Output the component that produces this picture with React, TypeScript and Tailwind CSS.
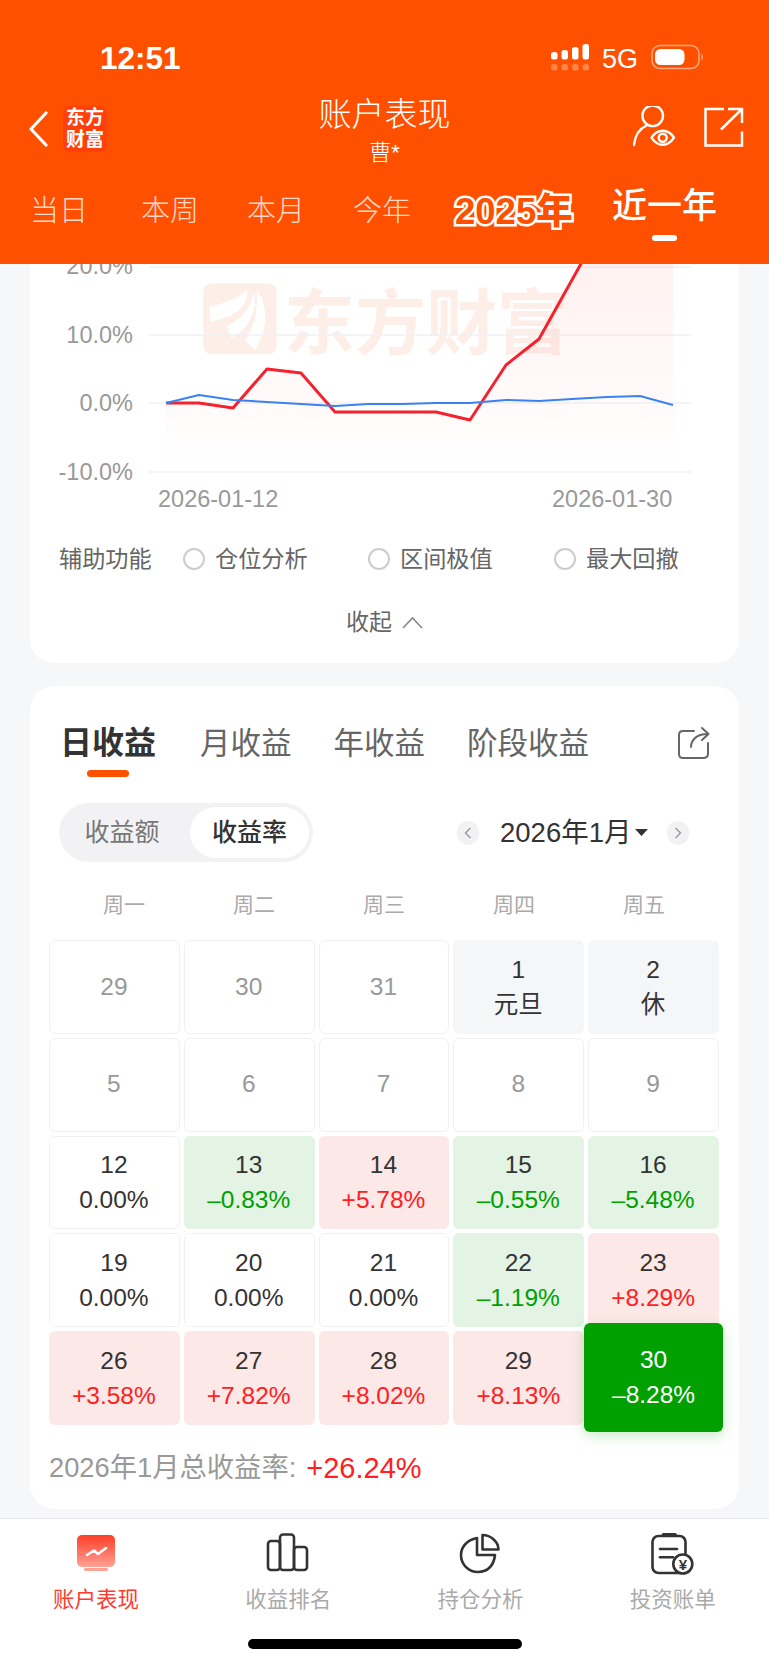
import React from "react";

const FONT = "font-['Liberation_Sans','Noto_Sans_CJK_SC',sans-serif]";

type Cell = { d: string; v?: string; t: "plain" | "holiday" | "zero" | "up" | "down" | "hero" };

const cells: Cell[] = [
  { d: "29", t: "plain" }, { d: "30", t: "plain" }, { d: "31", t: "plain" }, { d: "1", v: "元旦", t: "holiday" }, { d: "2", v: "休", t: "holiday" },
  { d: "5", t: "plain" }, { d: "6", t: "plain" }, { d: "7", t: "plain" }, { d: "8", t: "plain" }, { d: "9", t: "plain" },
  { d: "12", v: "0.00%", t: "zero" }, { d: "13", v: "–0.83%", t: "down" }, { d: "14", v: "+5.78%", t: "up" }, { d: "15", v: "–0.55%", t: "down" }, { d: "16", v: "–5.48%", t: "down" },
  { d: "19", v: "0.00%", t: "zero" }, { d: "20", v: "0.00%", t: "zero" }, { d: "21", v: "0.00%", t: "zero" }, { d: "22", v: "–1.19%", t: "down" }, { d: "23", v: "+8.29%", t: "up" },
  { d: "26", v: "+3.58%", t: "up" }, { d: "27", v: "+7.82%", t: "up" }, { d: "28", v: "+8.02%", t: "up" }, { d: "29", v: "+8.13%", t: "up" }, { d: "30", v: "–8.28%", t: "hero" },
];

function CalCell({ c }: { c: Cell }) {
  if (c.t === "plain") {
    return <div className="h-[93.75px] rounded-md border border-[#f1f1f3] bg-white flex items-center justify-center pr-[1px] text-[24.5px] text-[#999999]">{c.d}</div>;
  }
  if (c.t === "hero") {
    return (
      <div className="relative h-[93.75px]">
        <div className="absolute -left-[4px] -right-[4px] -top-[8px] -bottom-[7px] z-10 rounded-md bg-[#00a000] shadow-[0_4px_14px_rgba(0,160,0,0.22)] flex flex-col items-center justify-center text-white text-[24.5px] leading-[35px]">
          <div>{c.d}</div>
          <div>{c.v}</div>
        </div>
      </div>
    );
  }
  const box = c.t === "holiday" ? "bg-[#f5f6f8]" : c.t === "zero" ? "border border-[#f1f1f3] bg-white" : c.t === "up" ? "bg-[#fde8e8]" : "bg-[#e3f3e4]";
  const vc = c.t === "up" ? "text-[#ff2020]" : c.t === "down" ? "text-[#00a000]" : "text-[#333333]";
  return (
    <div className={`h-[93.75px] rounded-md flex flex-col items-center justify-center pr-[1px] text-[24.5px] leading-[35px] text-[#333333] ${box}`}>
      <div>{c.d}</div>
      <div className={vc}>{c.v}</div>
    </div>
  );
}

function StatusIcons() {
  return (
    <svg width="154" height="32" viewBox="550 44 154 32" className="block">
      <g fill="#fff">
        <rect x="551" y="52" width="6.5" height="7.5" rx="2.5" />
        <rect x="561.5" y="50" width="6.5" height="9.5" rx="2.5" />
        <rect x="572" y="47" width="6.5" height="12.5" rx="2.5" />
        <rect x="582.5" y="44" width="6.5" height="15.5" rx="2.5" />
      </g>
      <g fill="#fff" opacity="0.3">
        <rect x="551" y="64" width="6.5" height="6.5" rx="2.5" />
        <rect x="561.5" y="64" width="6.5" height="6.5" rx="2.5" />
        <rect x="572" y="64" width="6.5" height="6.5" rx="2.5" />
        <rect x="582.5" y="64" width="6.5" height="6.5" rx="2.5" />
      </g>
      <text x="602" y="68" fill="#fff" fontSize="27" fontFamily="Liberation Sans">5G</text>
      <rect x="652" y="45.5" width="47" height="23" rx="8" fill="none" stroke="#fff" strokeOpacity="0.5" strokeWidth="1.5" />
      <rect x="655" y="49" width="29.5" height="16" rx="5.5" fill="#fff" />
      <path d="M701.5 53.5 C703.5 54.5 703.5 59.5 701.5 60.5 Z" fill="#fff" fillOpacity="0.5" />
    </svg>
  );
}

function UserEye() {
  return (
    <svg width="44" height="42" viewBox="632 110 44 42" fill="none" stroke="#fff" strokeWidth="2.4" strokeLinecap="round" className="block">
      <circle cx="651.7" cy="119.8" r="10.3" />
      <path d="M633 149 C634 140 638 133 645.5 129.5" />
      <path d="M650.5 141.7 C654 136.5 658 134.8 661.7 134.8 C665.5 134.8 669.5 136.5 673 141.7 C669.5 147 665.5 148.8 661.7 148.8 C658 148.8 654 147 650.5 141.7 Z" />
      <circle cx="661.7" cy="141.7" r="4" />
    </svg>
  );
}

function ShareBox() {
  return (
    <svg width="42" height="42" viewBox="703 108 42 42" fill="none" stroke="#fff" strokeWidth="2.5" className="block">
      <path d="M724 111 H705.5 V147.5 H742 V133.5" />
      <path d="M721 131.5 L741.5 111.5 M728 111 H742 V125" />
    </svg>
  );
}

function Chart() {
  const red = "166,403 199,403 233,408 267,369 301,373 335,412 368,412 402,412 436,412 470,420 506,365 539,339 582,262";
  const blue = "166,403 199,395 233,400 267,402 301,404 335,406 368,404 403,404 436,403 470,403 506,400 539,401 572,399 607,397 640,396 673,405";
  return (
    <svg width="709" height="264" viewBox="30 264 709 264" className="block" fontFamily="Liberation Sans">
      <defs>
        <linearGradient id="area" x1="0" y1="264" x2="0" y2="472" gradientUnits="userSpaceOnUse">
          <stop offset="0" stopColor="#ff3b30" stopOpacity="0.07" />
          <stop offset="1" stopColor="#ff3b30" stopOpacity="0" />
        </linearGradient>
      </defs>
      <g transform="translate(195 270) scale(0.3333)">
        <rect x="25" y="40" width="220" height="213" rx="26" fill="#fdeee8" />
        <g fill="#fff">
          <path d="M45 155 L45 110 C90 100 130 85 155 60 C165 100 130 140 45 155 Z" />
          <path d="M95 170 C130 150 170 120 175 65 C190 110 170 170 110 205 Z" />
          <path d="M150 210 C180 170 190 110 185 60 C225 110 215 190 180 240 Z" />
        </g>
      </g>
      <text x="284" y="348" fontSize="71" fontWeight="700" fill="#fdeee8" fontFamily="Noto Sans CJK SC">东方财富</text>
      {[267, 335, 403, 472].map((y) => (
        <line key={y} x1="149" x2="691" y1={y} y2={y} stroke="#f0f1f4" strokeWidth="1.5" />
      ))}
      <polygon points={`${red} 673,262 673,472 166,472`} fill="url(#area)" />
      <polyline points={red} fill="none" stroke="#f5222d" strokeWidth="3" strokeLinejoin="round" />
      <polyline points={blue} fill="none" stroke="#3b82f0" strokeWidth="2" strokeLinejoin="round" />
      <g fill="#999999" fontSize="23.5" textAnchor="end">
        <text x="133" y="274">20.0%</text>
        <text x="133" y="343">10.0%</text>
        <text x="133" y="411">0.0%</text>
        <text x="133" y="480">-10.0%</text>
      </g>
      <g fill="#999999" fontSize="23.5">
        <text x="158" y="507">2026-01-12</text>
        <text x="552" y="507">2026-01-30</text>
      </g>
    </svg>
  );
}

function Option({ label, w }: { label: string; w: string }) {
  return (
    <div className={`flex items-center gap-[10px] ${w}`}>
      <span className="w-[22px] h-[22px] rounded-full border-2 border-[#cccccc] bg-white" />
      <span>{label}</span>
    </div>
  );
}

function TabIconPerf() {
  return (
    <svg width="48" height="44" viewBox="0 0 48 44" className="block">
      <defs>
        <linearGradient id="perf" x1="0" y1="0" x2="0" y2="1">
          <stop offset="0" stopColor="#ff3e26" />
          <stop offset="1" stopColor="#ffa194" />
        </linearGradient>
      </defs>
      <rect x="5" y="4" width="38" height="32" rx="5" fill="url(#perf)" />
      <rect x="12" y="37" width="24" height="3" rx="1.5" fill="#ffa194" />
      <polyline points="15,24 22,19.5 26,23 34,17" fill="none" stroke="#fff" strokeWidth="2.6" strokeLinecap="round" strokeLinejoin="round" />
    </svg>
  );
}

function TabIconBars() {
  return (
    <svg width="48" height="44" viewBox="1 0 48 44" fill="none" stroke="#333333" strokeWidth="2.6" className="block">
      <rect x="5" y="10" width="12" height="29" rx="3" />
      <rect x="17" y="3.5" width="14" height="35.5" rx="3" />
      <rect x="31" y="16" width="13" height="23" rx="3" />
    </svg>
  );
}

function TabIconPie() {
  return (
    <svg width="48" height="44" viewBox="0 0 48 44" fill="none" stroke="#333333" strokeWidth="2.6" strokeLinejoin="round" className="block">
      <path d="M20 7 C9 9 4 17 4 24 C4 33 11 41 21 41 C31 41 37 34 38 24 H20 Z" />
      <path d="M25.5 4 V18.5 H41.5 C41.5 11 34 4 25.5 4 Z" />
    </svg>
  );
}

function TabIconBill() {
  return (
    <svg width="48" height="44" viewBox="0 0 48 44" className="block">
      <rect x="3.5" y="5" width="33" height="37" rx="6" fill="none" stroke="#333333" strokeWidth="2.6" />
      <rect x="12.8" y="2" width="15" height="3" rx="1.5" fill="#333333" />
      <line x1="11" y1="18" x2="28" y2="18" stroke="#333333" strokeWidth="2.6" strokeLinecap="round" />
      <line x1="11" y1="26.3" x2="24" y2="26.3" stroke="#333333" strokeWidth="2.6" strokeLinecap="round" />
      <circle cx="33.8" cy="33" r="9.5" fill="#fff" stroke="#333333" strokeWidth="2.6" />
      <text x="33.8" y="38.5" textAnchor="middle" fontSize="15" fontWeight="700" fill="#333333" fontFamily="Liberation Sans">¥</text>
    </svg>
  );
}

export default function App() {
  return (
    <div className={`w-[769px] h-[1665px] overflow-hidden flex flex-col bg-[#f6f7f9] ${FONT}`}>
      {/* header */}
      <header className="h-[264px] shrink-0 bg-[#ff5000] text-white">
        <div className="h-[74px] pt-[40px] flex items-start">
          <span className="ml-[100px] mt-[1px] text-[31.5px] leading-[34px] font-semibold">12:51</span>
          <div className="ml-auto mr-[65px] mt-[4px]"><StatusIcons /></div>
        </div>
        <div className="h-[78px] mt-[22px] flex items-start">
          <div className="w-[150px] flex items-center pl-[28px] pt-[10px]">
            <svg width="20" height="36" viewBox="0 0 20 36" fill="none" stroke="#fff" strokeWidth="3.2" strokeLinecap="round" strokeLinejoin="round" className="block">
              <path d="M18 2 L3 18 L18 34" />
            </svg>
            <div className="ml-[15px] w-[44px] h-[46px] rounded-lg bg-[#ff3f0c] flex items-center justify-center text-center text-[19px] leading-[22px] font-bold">
              东方<br />财富
            </div>
          </div>
          <div className="flex-1 flex flex-col items-center">
            <div className="text-[33px] leading-[38px] font-light">账户表现</div>
            <div className="mt-[4px] text-[22px] leading-[30px] font-light">曹*</div>
          </div>
          <div className="w-[150px] flex items-start justify-end gap-[26px] pr-[24px] pt-[10px]">
            <UserEye />
            <ShareBox />
          </div>
        </div>
        <div className="flex items-start pl-[30px] mt-[16px] h-[74px] text-[29px] leading-[30px] text-[#ffd9c9] font-light">
          <span className="mt-[6px] w-[58px]">当日</span>
          <span className="mt-[6px] w-[58px] ml-[53px]">本周</span>
          <span className="mt-[6px] w-[58px] ml-[48px]">本月</span>
          <span className="mt-[6px] w-[58px] ml-[48px]">今年</span>
          <span className="mt-[5px] ml-[44px] w-[126px] text-[36.5px] leading-[34px] font-black text-[#ff5000] [-webkit-text-stroke:5px_white] [paint-order:stroke_fill] whitespace-nowrap">2025年</span>
          <div className="ml-[31px] w-[105px] -mt-[2px] flex flex-col items-center">
            <span className="text-[35px] leading-[36px] text-white font-medium whitespace-nowrap">近一年</span>
            <span className="mt-[11px] w-[25px] h-[6px] rounded-full bg-white" />
          </div>
        </div>
      </header>

      {/* chart card */}
      <section className="mx-[30px] h-[399px] shrink-0 rounded-b-[24px] bg-white">
        <Chart />
        <div className="h-[60px] pt-[3px] pl-[29px] flex items-center text-[23.2px] text-[#666666]">
          <span className="w-[124px]">辅助功能</span>
          <Option label="仓位分析" w="w-[185px]" />
          <Option label="区间极值" w="w-[186px]" />
          <Option label="最大回撤" w="w-[130px]" />
        </div>
        <div className="h-[68px] flex items-center justify-center gap-[10px] text-[23px] text-[#666666]">
          <span>收起</span>
          <svg width="21" height="13" viewBox="0 0 21 13" fill="none" stroke="#888888" strokeWidth="1.6" className="block">
            <path d="M1 12 L10.5 2 L20 12" />
          </svg>
        </div>
      </section>

      {/* calendar card */}
      <section className="mx-[30px] mt-[23px] h-[823px] shrink-0 rounded-[24px] bg-white">
        <div className="pt-[35px] pl-[30px] pr-[28px] flex items-start gap-[42px] text-[#666666] text-[30.5px] leading-[44px]">
          <div className="flex flex-col w-[97px] mr-[1px]">
            <span className="text-[32px] font-bold text-[#333333] whitespace-nowrap">日收益</span>
            <span className="mt-[5px] ml-[27px] w-[42px] h-[7px] rounded-full bg-[#ff5000]" />
          </div>
          <span>月收益</span>
          <span>年收益</span>
          <span>阶段收益</span>
          <svg width="34" height="34" viewBox="0 0 34 34" fill="none" stroke="#666666" strokeWidth="2" strokeLinecap="round" strokeLinejoin="round" className="block ml-auto mt-[5px]">
            <path d="M17 5 H6 C3.5 5 2 6.5 2 9 V28 C2 30.5 3.5 32 6 32 H26 C29 32 31 30.5 31 28 V17" />
            <path d="M14 21 C14 14 20 8 30 8 M25 2 L31.5 8 L25 14" />
          </svg>
        </div>

        <div className="mt-[26px] pl-[29px] flex items-center">
          <div className="w-[254px] h-[59px] rounded-full bg-[#f2f2f4] p-[4px] flex items-stretch">
            <div className="w-[127px] pr-[9px] flex items-center justify-center text-[25px] text-[#777777]">收益额</div>
            <div className="w-[119px] h-[51px] rounded-full bg-white flex items-center justify-center text-[25px] font-medium text-[#333333]">收益率</div>
          </div>
          <div className="ml-[144px] flex items-center">
            <span className="w-[22px] h-[24px] rounded-full bg-[#f2f2f4] flex items-center justify-center">
              <svg width="8" height="12" viewBox="0 0 8 12" fill="none" stroke="#999999" strokeWidth="1.4" className="block"><path d="M6.5 1 L1.5 6 L6.5 11" /></svg>
            </span>
            <span className="ml-[21px] text-[27.5px] leading-[32px] text-[#333333] whitespace-nowrap">2026年1月</span>
            <svg width="13" height="7" viewBox="0 0 13 7" className="block ml-[4px]"><path d="M0 0 H13 L6.5 7 Z" fill="#333333" /></svg>
            <span className="ml-[19px] w-[22px] h-[24px] rounded-full bg-[#f2f2f4] flex items-center justify-center">
              <svg width="8" height="12" viewBox="0 0 8 12" fill="none" stroke="#999999" strokeWidth="1.4" className="block"><path d="M1.5 1 L6.5 6 L1.5 11" /></svg>
            </span>
          </div>
        </div>

        <div className="mt-[23px] ml-[29px] w-[650px] h-[40px] grid grid-cols-5 items-center text-center text-[21px] text-[#aaaaaa]">
          <span>周一</span><span>周二</span><span>周三</span><span>周四</span><span>周五</span>
        </div>

        <div className="mt-[15px] ml-[19px] w-[670px] grid grid-cols-5 gap-x-[4px] gap-y-[4px]">
          {cells.map((c, i) => <CalCell key={i} c={c} />)}
        </div>

        <div className="mt-[24px] ml-[19px] h-[40px] flex items-center text-[27.3px] text-[#999999] whitespace-nowrap">
          <span>2026年1月总收益率:</span>
          <span className="ml-[10px] text-[29px] font-medium text-[#ff2020]">+26.24%</span>
        </div>
      </section>

      {/* tab bar */}
      <nav className="mt-[9px] flex-1 bg-white border-t border-[#e9e9ec] flex flex-col">
        <div className="pt-[12px] grid grid-cols-4 text-[21.5px] leading-[30px] text-[#aaaaaa]">
          <div className="flex flex-col items-center"><TabIconPerf /><span className="mt-[10px] text-[#ff3b30]">账户表现</span></div>
          <div className="flex flex-col items-center"><TabIconBars /><span className="mt-[10px]">收益排名</span></div>
          <div className="flex flex-col items-center"><TabIconPie /><span className="mt-[10px]">持仓分析</span></div>
          <div className="flex flex-col items-center"><TabIconBill /><span className="mt-[10px]">投资账单</span></div>
        </div>
        <div className="mt-[24px] mx-auto w-[274px] h-[10px] rounded-full bg-black" />
      </nav>
    </div>
  );
}
